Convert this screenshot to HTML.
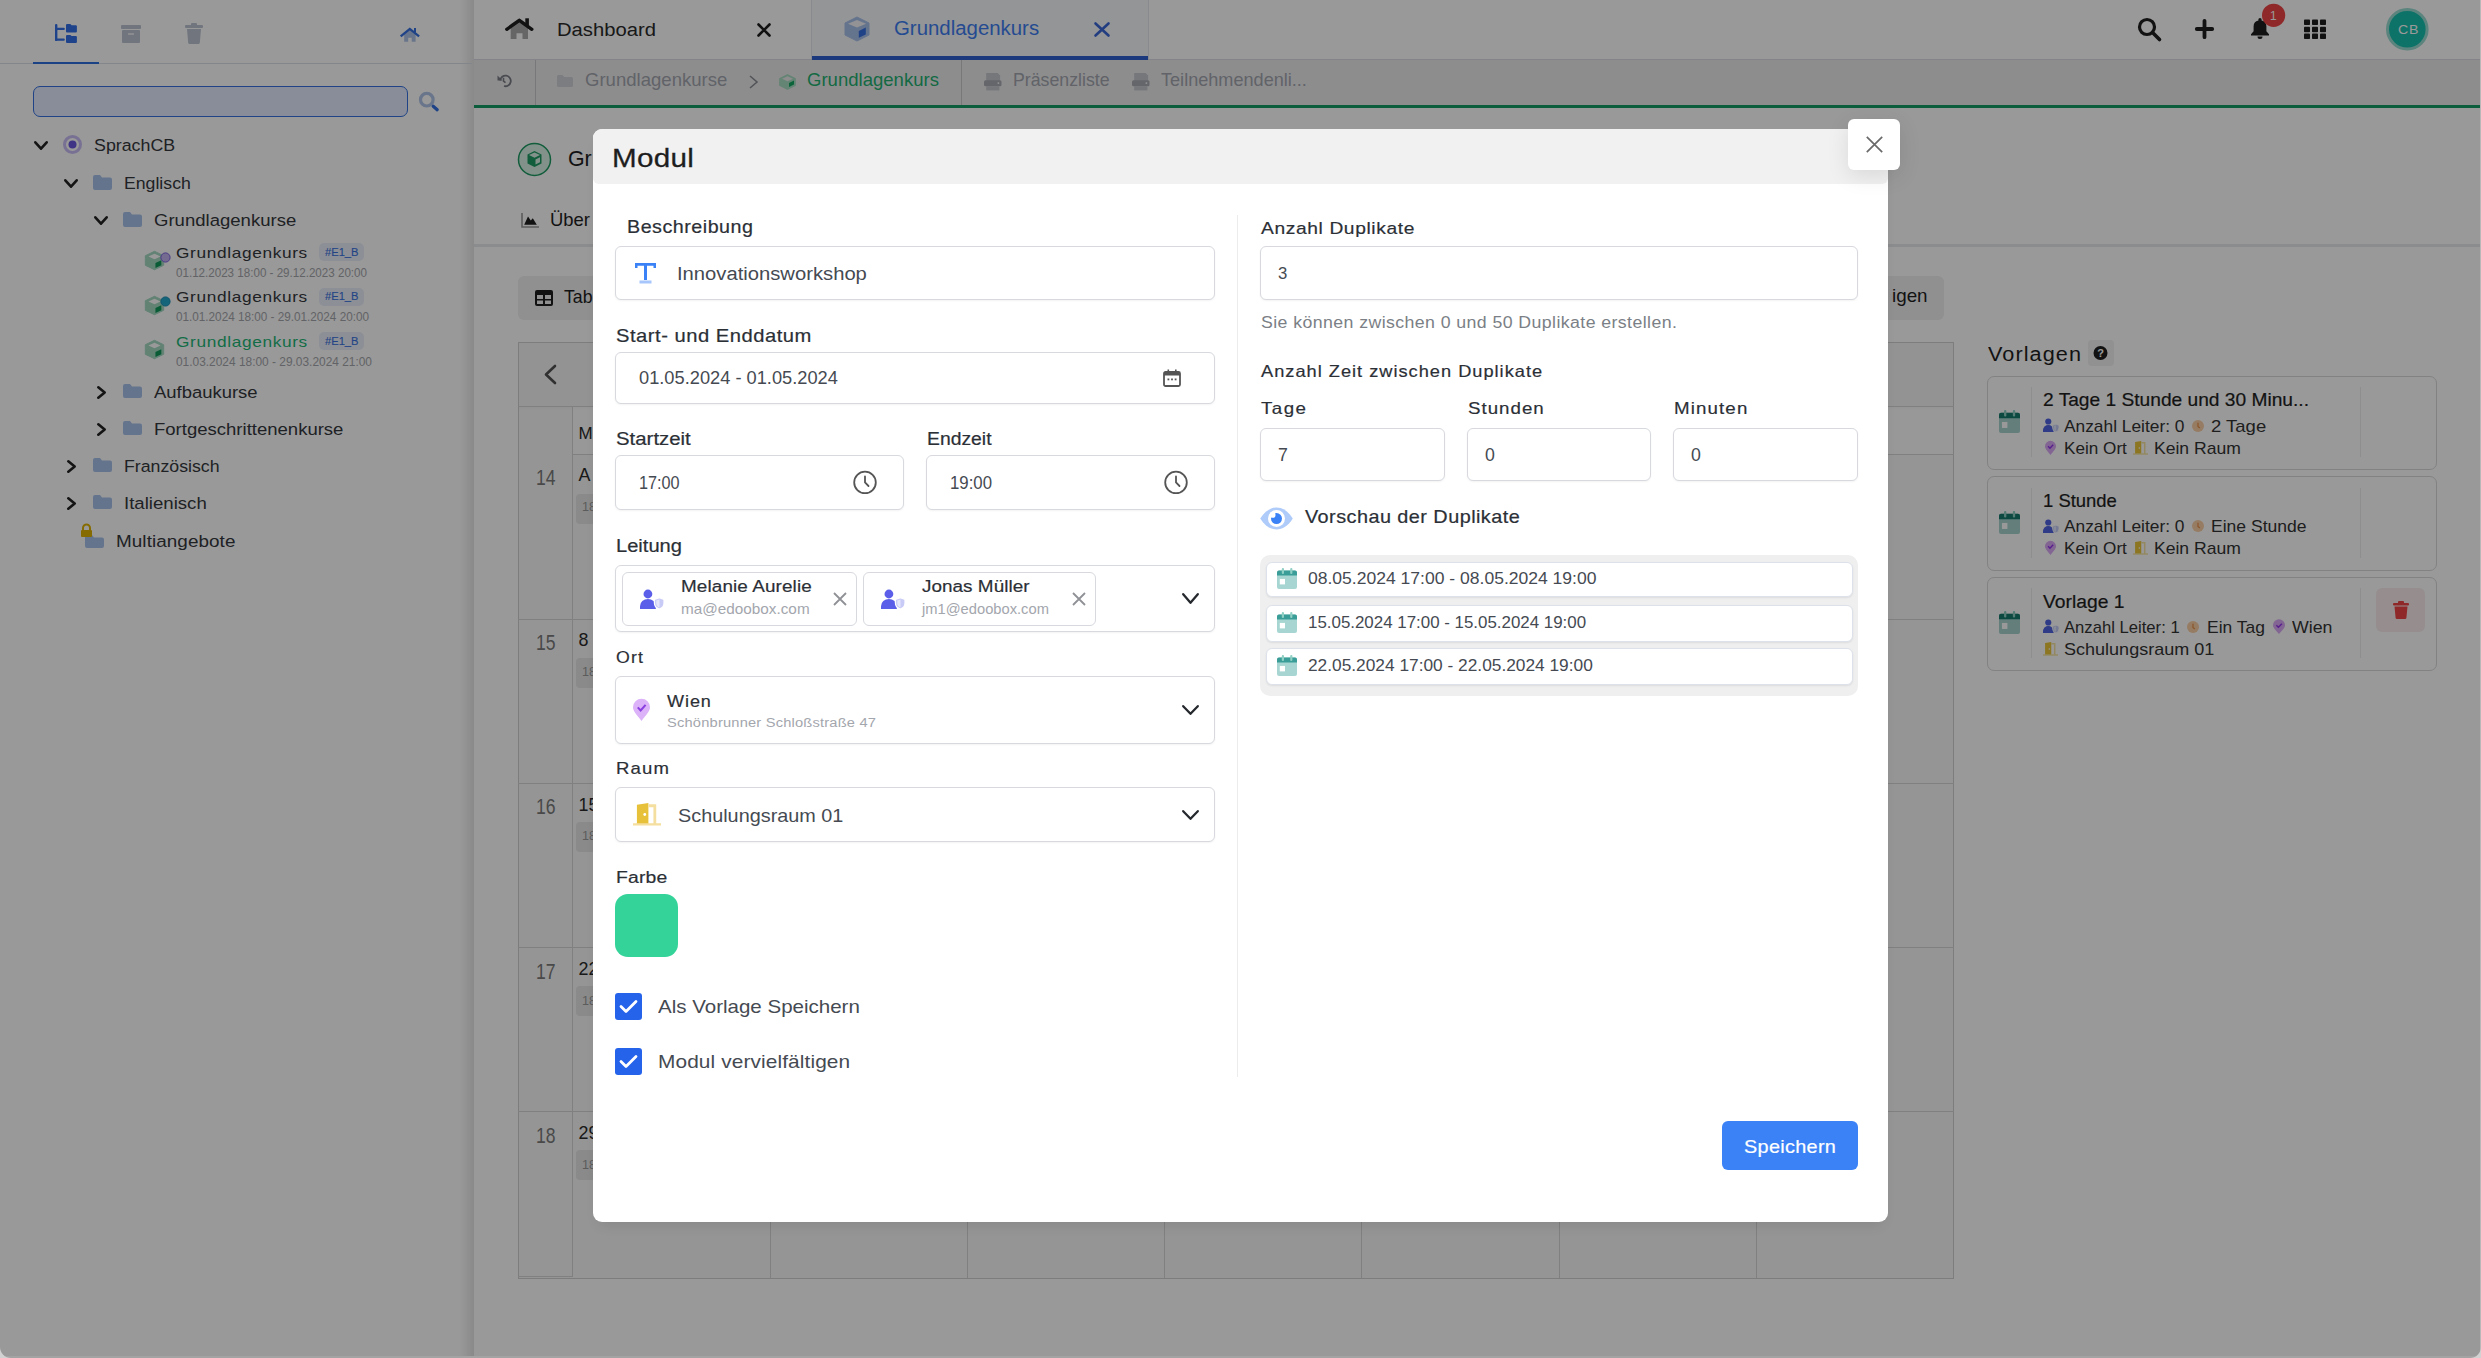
<!DOCTYPE html><html><head><meta charset="utf-8"><title>Modul</title><style>
html,body{margin:0;padding:0;}
body{width:2481px;height:1358px;overflow:hidden;position:relative;font-family:"Liberation Sans",sans-serif;background:#fff;}
.t{position:absolute;white-space:nowrap;line-height:1;}
.r{position:absolute;display:block;}
svg.r{overflow:visible;}
</style></head><body>
<div class="r" style="left:0px;top:0px;width:474px;height:1358px;background:#fff;"></div>
<div class="r" style="left:460px;top:0px;width:14px;height:1358px;background:linear-gradient(90deg,rgba(0,0,0,0) 0%,rgba(0,0,0,0.10) 100%);"></div>
<div class="r" style="left:0px;top:63px;width:472px;height:1px;background:#dbe1ea;"></div>
<div class="r" style="left:33px;top:62px;width:66px;height:2px;background:#2f6fe0;"></div>
<svg class="r" style="left:54px;top:23px;" width="24" height="21" viewBox="0 0 24 21" preserveAspectRatio="none"><g fill="#3470e8"><rect x="1" y="1" width="2.4" height="17" rx="1"/><rect x="2" y="4.7" width="8.8" height="2.2" rx="1"/><rect x="1" y="15.5" width="9.8" height="2.2" rx="1"/><path d="M12 2.2a1.1 1.1 0 0 1 1.1-1.1h3.3l1.2 1.1h4.2a1.1 1.1 0 0 1 1.1 1.1v5.2a1 1 0 0 1-1 1H13a1 1 0 0 1-1-1z"/><path d="M12 13a1.1 1.1 0 0 1 1.1-1.1h3.3l1.2 1.1h4.2a1.1 1.1 0 0 1 1.1 1.1v5a1 1 0 0 1-1 1H13a1 1 0 0 1-1-1z"/></g></svg>
<svg class="r" style="left:121px;top:25px;" width="20" height="18" viewBox="0 0 20 18" preserveAspectRatio="none"><rect x="0" y="0" width="20" height="4" rx="1" fill="#bcc5d2"/><rect x="1" y="5" width="18" height="13" rx="1" fill="#bcc5d2"/><rect x="7" y="8" width="6" height="2" fill="#fff" opacity="0.6"/></svg>
<svg class="r" style="left:185px;top:23px;" width="18" height="21" viewBox="0 0 18 21" preserveAspectRatio="none"><rect x="0" y="2" width="18" height="3" rx="1" fill="#bcc5d2"/><rect x="6" y="0" width="6" height="3" rx="1" fill="#bcc5d2"/><path d="M2 6h14l-1.2 14a1.5 1.5 0 0 1-1.5 1H4.7a1.5 1.5 0 0 1-1.5-1z" fill="#bcc5d2"/></svg>
<svg class="r" style="left:400px;top:26px;" width="20" height="17" viewBox="0 0 20 17" preserveAspectRatio="none"><path d="M4.2 7.3L9.8 2.8l5.8 4.5V15.7H11.7V11.8H8.2V15.7H4.2z" fill="#b0c3e6"/><polyline points="1.6,9.6 9.8,2.9 18.2,9.6" fill="none" stroke="#3470e0" stroke-width="2.3" stroke-linecap="square" stroke-linejoin="miter"/><rect x="14" y="2" width="2" height="4.5" fill="#3470e0"/></svg>
<div class="r" style="left:33px;top:86px;width:375px;height:31px;background:#e3ebff;border:1.6px solid #3470e0;border-radius:7px;box-sizing:border-box;"></div>
<svg class="r" style="left:418px;top:91px;" width="21" height="21" viewBox="0 0 21 21" preserveAspectRatio="none"><circle cx="8.8" cy="8.7" r="6.3" fill="none" stroke="#b0c3e6" stroke-width="3.2"/><path d="M15.2 15.2l4 3.6" stroke="#3470e0" stroke-width="3.2" stroke-linecap="round"/></svg>
<svg class="r" style="left:34px;top:141px;" width="14" height="9" viewBox="0 0 14 9" preserveAspectRatio="none"><polyline points="1.3,1.3 7.0,7.7 12.7,1.3" fill="none" stroke="#222" stroke-width="2.6" stroke-linecap="round" stroke-linejoin="round"/></svg>
<svg class="r" style="left:63px;top:135px;" width="19" height="19" viewBox="0 0 19 19" preserveAspectRatio="none"><circle cx="9.5" cy="9.5" r="8" fill="none" stroke="#c9bdf5" stroke-width="3"/><circle cx="9.5" cy="9.5" r="4" fill="#6a55de"/></svg>
<div class="t" style="left:94.30px;top:138.22px;font-size:16.86px;color:#34373c;transform:scaleX(1.0561);transform-origin:0 0;">SprachCB</div>
<svg class="r" style="left:64px;top:179px;" width="14" height="9" viewBox="0 0 14 9" preserveAspectRatio="none"><polyline points="1.3,1.3 7.0,7.7 12.7,1.3" fill="none" stroke="#222" stroke-width="2.6" stroke-linecap="round" stroke-linejoin="round"/></svg>
<svg class="r" style="left:93px;top:175px;" width="19" height="15" viewBox="0 0 19 15" preserveAspectRatio="none"><path d="M0 2a2 2 0 0 1 2-2h5l2 2.5h8a2 2 0 0 1 2 2V13a2 2 0 0 1-2 2H2a2 2 0 0 1-2-2z" fill="#a9c2ec"/></svg>
<div class="t" style="left:124.00px;top:175.82px;font-size:16.86px;color:#34373c;transform:scaleX(1.0481);transform-origin:0 0;">Englisch</div>
<svg class="r" style="left:94px;top:216px;" width="14" height="9" viewBox="0 0 14 9" preserveAspectRatio="none"><polyline points="1.3,1.3 7.0,7.7 12.7,1.3" fill="none" stroke="#222" stroke-width="2.6" stroke-linecap="round" stroke-linejoin="round"/></svg>
<svg class="r" style="left:123px;top:212px;" width="19" height="15" viewBox="0 0 19 15" preserveAspectRatio="none"><path d="M0 2a2 2 0 0 1 2-2h5l2 2.5h8a2 2 0 0 1 2 2V13a2 2 0 0 1-2 2H2a2 2 0 0 1-2-2z" fill="#a9c2ec"/></svg>
<div class="t" style="left:154.30px;top:212.52px;font-size:16.86px;color:#34373c;transform:scaleX(1.0996);transform-origin:0 0;">Grundlagenkurse</div>
<svg class="r" style="left:145px;top:251.0px;" width="19" height="19.0" viewBox="0 0 19 19.0" preserveAspectRatio="none"><path d="M9.5 0.3L18.7 4.75V14.25L9.5 18.7L0.3 14.25V4.75z" fill="#a3d9c2" stroke="#a3d9c2" stroke-width="1" stroke-linejoin="round"/><path d="M9.5 2.66L15.579999999999998 5.51L9.5 8.36L3.42 5.51z" fill="#ffffff"/><path d="M10.450000000000001 11.97L16.34 9.31V14.25L10.450000000000001 16.91z" fill="#12995a"/></svg>
<svg class="r" style="left:160px;top:251.5px;" width="11" height="11.0" viewBox="0 0 11 11.0" preserveAspectRatio="none"><circle cx="5.5" cy="5.5" r="4.6" fill="#c3b2f0" stroke="#7d5fe0" stroke-width="1"/></svg>
<div class="t" style="left:176.10px;top:244.75px;font-size:15.41px;color:#34373c;letter-spacing:0.578px;transform:scaleX(1.1200);transform-origin:0 0;">Grundlagenkurs</div>
<div class="r" style="left:319px;top:243.2px;width:45px;height:18.30000000000001px;background:#e9effa;border-radius:5px;"></div>
<div class="t" style="left:325.00px;top:246.95px;font-size:11.05px;color:#3a72e0;-webkit-text-stroke:0.12px #3a72e0;transform:scaleX(1.0092);transform-origin:0 0;">#E1_B</div>
<div class="t" style="left:176.10px;top:266.72px;font-size:12.50px;color:#a4a6ab;transform:scaleX(0.9283);transform-origin:0 0;">01.12.2023 18:00 - 29.12.2023 20:00</div>
<svg class="r" style="left:145px;top:295.5px;" width="19" height="19.0" viewBox="0 0 19 19.0" preserveAspectRatio="none"><path d="M9.5 0.3L18.7 4.75V14.25L9.5 18.7L0.3 14.25V4.75z" fill="#a3d9c2" stroke="#a3d9c2" stroke-width="1" stroke-linejoin="round"/><path d="M9.5 2.66L15.579999999999998 5.51L9.5 8.36L3.42 5.51z" fill="#ffffff"/><path d="M10.450000000000001 11.97L16.34 9.31V14.25L10.450000000000001 16.91z" fill="#12995a"/></svg>
<svg class="r" style="left:160px;top:296.0px;" width="11" height="11.0" viewBox="0 0 11 11.0" preserveAspectRatio="none"><circle cx="5.5" cy="5.5" r="4.6" fill="#22a7cc" stroke="#1b8fb5" stroke-width="1"/></svg>
<div class="t" style="left:176.10px;top:289.25px;font-size:15.41px;color:#34373c;letter-spacing:0.578px;transform:scaleX(1.1200);transform-origin:0 0;">Grundlagenkurs</div>
<div class="r" style="left:319px;top:287.7px;width:45px;height:18.30000000000001px;background:#e9effa;border-radius:5px;"></div>
<div class="t" style="left:325.00px;top:291.45px;font-size:11.05px;color:#3a72e0;-webkit-text-stroke:0.12px #3a72e0;transform:scaleX(1.0092);transform-origin:0 0;">#E1_B</div>
<div class="t" style="left:176.10px;top:311.22px;font-size:12.50px;color:#a4a6ab;transform:scaleX(0.9380);transform-origin:0 0;">01.01.2024 18:00 - 29.01.2024 20:00</div>
<svg class="r" style="left:145px;top:340.0px;" width="19" height="19.0" viewBox="0 0 19 19.0" preserveAspectRatio="none"><path d="M9.5 0.3L18.7 4.75V14.25L9.5 18.7L0.3 14.25V4.75z" fill="#a3d9c2" stroke="#a3d9c2" stroke-width="1" stroke-linejoin="round"/><path d="M9.5 2.66L15.579999999999998 5.51L9.5 8.36L3.42 5.51z" fill="#ffffff"/><path d="M10.450000000000001 11.97L16.34 9.31V14.25L10.450000000000001 16.91z" fill="#12995a"/></svg>
<div class="t" style="left:176.10px;top:333.75px;font-size:15.41px;color:#1db676;letter-spacing:0.578px;transform:scaleX(1.1200);transform-origin:0 0;">Grundlagenkurs</div>
<div class="r" style="left:319px;top:332.2px;width:45px;height:18.30000000000001px;background:#e9effa;border-radius:5px;"></div>
<div class="t" style="left:325.00px;top:335.95px;font-size:11.05px;color:#3a72e0;-webkit-text-stroke:0.12px #3a72e0;transform:scaleX(1.0092);transform-origin:0 0;">#E1_B</div>
<div class="t" style="left:176.10px;top:355.72px;font-size:12.50px;color:#a4a6ab;transform:scaleX(0.9526);transform-origin:0 0;">01.03.2024 18:00 - 29.03.2024 21:00</div>
<svg class="r" style="left:97px;top:386px;" width="9" height="13" viewBox="0 0 9 13" preserveAspectRatio="none"><polyline points="1.3,1.3 7.7,6.5 1.3,11.7" fill="none" stroke="#222" stroke-width="2.6" stroke-linecap="round" stroke-linejoin="round"/></svg>
<svg class="r" style="left:123px;top:384px;" width="19" height="14" viewBox="0 0 19 14" preserveAspectRatio="none"><path d="M0 2a2 2 0 0 1 2-2h5l2 2.5h8a2 2 0 0 1 2 2V12a2 2 0 0 1-2 2H2a2 2 0 0 1-2-2z" fill="#a9c2ec"/></svg>
<div class="t" style="left:154.20px;top:384.92px;font-size:16.86px;color:#34373c;transform:scaleX(1.0943);transform-origin:0 0;">Aufbaukurse</div>
<svg class="r" style="left:97px;top:423px;" width="9" height="13" viewBox="0 0 9 13" preserveAspectRatio="none"><polyline points="1.3,1.3 7.7,6.5 1.3,11.7" fill="none" stroke="#222" stroke-width="2.6" stroke-linecap="round" stroke-linejoin="round"/></svg>
<svg class="r" style="left:123px;top:421px;" width="19" height="14" viewBox="0 0 19 14" preserveAspectRatio="none"><path d="M0 2a2 2 0 0 1 2-2h5l2 2.5h8a2 2 0 0 1 2 2V12a2 2 0 0 1-2 2H2a2 2 0 0 1-2-2z" fill="#a9c2ec"/></svg>
<div class="t" style="left:154.20px;top:421.52px;font-size:16.86px;color:#34373c;transform:scaleX(1.0986);transform-origin:0 0;">Fortgeschrittenenkurse</div>
<svg class="r" style="left:67px;top:460px;" width="9" height="13" viewBox="0 0 9 13" preserveAspectRatio="none"><polyline points="1.3,1.3 7.7,6.5 1.3,11.7" fill="none" stroke="#222" stroke-width="2.6" stroke-linecap="round" stroke-linejoin="round"/></svg>
<svg class="r" style="left:93px;top:458px;" width="19" height="14" viewBox="0 0 19 14" preserveAspectRatio="none"><path d="M0 2a2 2 0 0 1 2-2h5l2 2.5h8a2 2 0 0 1 2 2V12a2 2 0 0 1-2 2H2a2 2 0 0 1-2-2z" fill="#a9c2ec"/></svg>
<div class="t" style="left:124.30px;top:459.02px;font-size:16.86px;color:#34373c;transform:scaleX(1.0519);transform-origin:0 0;">Französisch</div>
<svg class="r" style="left:67px;top:497px;" width="9" height="13" viewBox="0 0 9 13" preserveAspectRatio="none"><polyline points="1.3,1.3 7.7,6.5 1.3,11.7" fill="none" stroke="#222" stroke-width="2.6" stroke-linecap="round" stroke-linejoin="round"/></svg>
<svg class="r" style="left:93px;top:495px;" width="19" height="14" viewBox="0 0 19 14" preserveAspectRatio="none"><path d="M0 2a2 2 0 0 1 2-2h5l2 2.5h8a2 2 0 0 1 2 2V12a2 2 0 0 1-2 2H2a2 2 0 0 1-2-2z" fill="#a9c2ec"/></svg>
<div class="t" style="left:124.30px;top:496.22px;font-size:16.86px;color:#34373c;transform:scaleX(1.1035);transform-origin:0 0;">Italienisch</div>
<svg class="r" style="left:85px;top:535px;" width="19" height="13" viewBox="0 0 19 13" preserveAspectRatio="none"><path d="M0 2a2 2 0 0 1 2-2h5l2 2.5h8a2 2 0 0 1 2 2V11a2 2 0 0 1-2 2H2a2 2 0 0 1-2-2z" fill="#a9c2ec"/></svg>
<svg class="r" style="left:80px;top:524px;" width="13" height="13" viewBox="0 0 13 13" preserveAspectRatio="none"><path d="M3 6V4a3.5 3.5 0 0 1 7 0v2" fill="none" stroke="#e0b400" stroke-width="2"/><rect x="1" y="6" width="11" height="7" rx="1" fill="#e0b400"/></svg>
<div class="t" style="left:116.00px;top:534.42px;font-size:16.86px;color:#34373c;letter-spacing:0.060px;transform:scaleX(1.1200);transform-origin:0 0;">Multiangebote</div>
<div class="r" style="left:474px;top:0px;width:2007px;height:60px;background:#fff;"></div>
<div class="r" style="left:474px;top:59px;width:2007px;height:1px;background:#d9dde5;"></div>
<div class="r" style="left:812px;top:0px;width:336px;height:59px;background:#f7f8fa;"></div>
<div class="r" style="left:811px;top:0px;width:1px;height:59px;background:#e3e6ec;"></div>
<div class="r" style="left:1148px;top:0px;width:1px;height:59px;background:#e3e6ec;"></div>
<div class="r" style="left:812px;top:56px;width:336px;height:4px;background:#2f5fd0;"></div>
<svg class="r" style="left:505px;top:17px;" width="29" height="24" viewBox="0 0 29 24" preserveAspectRatio="none"><path d="M5.7 7.2L14.3 1.5 23 7.2V22H17.5v-5.8H11.5V22H5.7z" fill="#aaaaaa"/><polyline points="1.8,12.3 14.3,3.3 26.8,12.3" fill="none" stroke="#1e1e1e" stroke-width="3.4" stroke-linecap="round" stroke-linejoin="round"/><rect x="20.3" y="1.3" width="3.6" height="7.5" fill="#1e1e1e"/></svg>
<div class="t" style="left:556.50px;top:20.87px;font-size:18.46px;color:#2a2a2a;transform:scaleX(1.0967);transform-origin:0 0;">Dashboard</div>
<svg class="r" style="left:757px;top:23px;" width="14" height="14" viewBox="0 0 14 14" preserveAspectRatio="none"><path d="M1.5 1.5l11 11M12.5 1.5l-11 11" stroke="#1d1d1d" stroke-width="2.6" stroke-linecap="round"/></svg>
<svg class="r" style="left:844px;top:16px;" width="26" height="25" viewBox="0 0 26 25" preserveAspectRatio="none"><path d="M13 1L25 7v12L13 25 1 19V7z" fill="#a9c1ec" stroke="#a9c1ec" stroke-width="1" stroke-linejoin="round"/><path d="M13 4L22 7.8 13 11.6 4 7.8z" fill="#f5f6f8"/><path d="M14.8 15l7-3.4v6.8L14.8 21.8z" fill="#3470e0"/></svg>
<div class="t" style="left:893.90px;top:19.13px;font-size:19.33px;color:#3d7ef2;transform:scaleX(1.0549);transform-origin:0 0;">Grundlagenkurs</div>
<svg class="r" style="left:1094px;top:22px;" width="16" height="15" viewBox="0 0 16 15" preserveAspectRatio="none"><path d="M1.5 1.5l13 12M14.5 1.5l-13 12" stroke="#3a66d6" stroke-width="2.6" stroke-linecap="round"/></svg>
<svg class="r" style="left:2137px;top:17px;" width="25" height="24" viewBox="0 0 25 24" preserveAspectRatio="none"><circle cx="10" cy="10" r="7.5" fill="none" stroke="#1e1e1e" stroke-width="3.2"/><path d="M15.5 15.5l7 7" stroke="#1e1e1e" stroke-width="3.6" stroke-linecap="round"/></svg>
<svg class="r" style="left:2195px;top:19px;" width="19" height="20" viewBox="0 0 19 20" preserveAspectRatio="none"><path d="M9.5 1.8v16.4M1.8 10h15.4" stroke="#1e1e1e" stroke-width="3.8" stroke-linecap="round"/></svg>
<svg class="r" style="left:2250px;top:17px;" width="20" height="23" viewBox="0 0 20 23" preserveAspectRatio="none"><path d="M10 1a1.6 1.6 0 0 1 1.6 1.6v.9a6.2 6.2 0 0 1 4.8 6.1v4.6l2.6 3v1.4H1v-1.4l2.6-3V9.6a6.2 6.2 0 0 1 4.8-6.1v-.9A1.6 1.6 0 0 1 10 1z" fill="#1e1e1e"/><path d="M7.5 19.6h5a2.5 2.5 0 0 1-5 0z" fill="#1e1e1e"/></svg>
<svg class="r" style="left:2262px;top:4px;" width="24" height="24" viewBox="0 0 24 24" preserveAspectRatio="none"><circle cx="11.6" cy="11.3" r="11.6" fill="#ef4444"/></svg>
<div class="t" style="left:2270.00px;top:10.71px;font-size:11.92px;color:#fff;">1</div>
<svg class="r" style="left:2304px;top:19px;" width="23" height="20" viewBox="0 0 23 20" preserveAspectRatio="none"><g fill="#1e1e1e"><rect x="0" y="0.5" width="6" height="5.5" rx="0.8"/><rect x="8" y="0.5" width="6" height="5.5" rx="0.8"/><rect x="16" y="0.5" width="6" height="5.5" rx="0.8"/><rect x="0" y="7.7" width="6" height="5.5" rx="0.8"/><rect x="8" y="7.7" width="6" height="5.5" rx="0.8"/><rect x="16" y="7.7" width="6" height="5.5" rx="0.8"/><rect x="0" y="14.5" width="6" height="5.5" rx="0.8"/><rect x="8" y="14.5" width="6" height="5.5" rx="0.8"/><rect x="16" y="14.5" width="6" height="5.5" rx="0.8"/></g></svg>
<svg class="r" style="left:2386px;top:8px;" width="43" height="43" viewBox="0 0 43 43" preserveAspectRatio="none"><circle cx="21.3" cy="21.3" r="19.8" fill="#17c0ad" stroke="#9adcd2" stroke-width="3"/></svg>
<div class="t" style="left:2398.00px;top:23.89px;font-size:12.65px;color:#ffffff;letter-spacing:0.637px;transform:scaleX(1.1200);transform-origin:0 0;">CB</div>
<div class="r" style="left:474px;top:60px;width:2007px;height:45px;background:#ececed;"></div>
<div class="r" style="left:474px;top:105px;width:2007px;height:3px;background:#149c64;"></div>
<div class="r" style="left:535px;top:60px;width:1px;height:45px;background:#c9c9cc;"></div>
<div class="r" style="left:961px;top:60px;width:1px;height:45px;background:#c9c9cc;"></div>
<svg class="r" style="left:497px;top:74px;" width="14" height="13" viewBox="0 0 14 13" preserveAspectRatio="none"><path d="M3.2 6.5A5.3 5.3 0 1 1 7 12" fill="none" stroke="#7a7d85" stroke-width="1.8"/><path d="M0.5 1.5v5h5z" fill="#7a7d85"/><path d="M6.5 3.8v3.2l2 1.6" fill="none" stroke="#7a7d85" stroke-width="1.6"/></svg>
<svg class="r" style="left:557px;top:75px;" width="16" height="12" viewBox="0 0 16 12" preserveAspectRatio="none"><path d="M0 1.5a1.5 1.5 0 0 1 1.5-1.5h4l1.7 2h7.3a1.5 1.5 0 0 1 1.5 1.5v7a1.5 1.5 0 0 1-1.5 1.5h-13A1.5 1.5 0 0 1 0 10.5z" fill="#cdd0d6"/></svg>
<div class="t" style="left:584.80px;top:71.79px;font-size:17.73px;color:#a2a5ad;transform:scaleX(1.0470);transform-origin:0 0;">Grundlagenkurse</div>
<svg class="r" style="left:749px;top:75px;" width="9" height="14" viewBox="0 0 9 14" preserveAspectRatio="none"><polyline points="1,1 8,7 1,13" fill="none" stroke="#8a8c92" stroke-width="1.6"/></svg>
<svg class="r" style="left:779px;top:74px;" width="17" height="15" viewBox="0 0 17 15" preserveAspectRatio="none"><path d="M8.5 0.5L16.5 4.5v7l-8 4-8-4v-7z" fill="#a7dcc2" stroke="#a7dcc2" stroke-width="0.8" stroke-linejoin="round"/><path d="M8.5 2.3L14 4.8 8.5 7.3 3 4.8z" fill="#ececed"/><path d="M10 9l5-2.5v4L10 13z" fill="#15a862"/></svg>
<div class="t" style="left:806.50px;top:71.79px;font-size:17.73px;color:#22b070;transform:scaleX(1.0462);transform-origin:0 0;">Grundlagenkurs</div>
<svg class="r" style="left:984px;top:73px;" width="18" height="18" viewBox="0 0 18 18" preserveAspectRatio="none"><path d="M2.2 0h11.5l2.4 2.4V8H2.2z" fill="#c4c6cc"/><rect x="0" y="7.2" width="17.5" height="6" rx="1.5" fill="#a9abb2"/><rect x="2.2" y="13.2" width="13.2" height="4.2" fill="#c4c6cc"/><rect x="13.6" y="9.4" width="1.6" height="1.4" fill="#fff"/></svg>
<div class="t" style="left:1013.40px;top:71.79px;font-size:17.73px;color:#a2a5ad;transform:scaleX(1.0005);transform-origin:0 0;">Präsenzliste</div>
<svg class="r" style="left:1132px;top:73px;" width="18" height="18" viewBox="0 0 18 18" preserveAspectRatio="none"><path d="M2.2 0h11.5l2.4 2.4V8H2.2z" fill="#c4c6cc"/><rect x="0" y="7.2" width="17.5" height="6" rx="1.5" fill="#a9abb2"/><rect x="2.2" y="13.2" width="13.2" height="4.2" fill="#c4c6cc"/><rect x="13.6" y="9.4" width="1.6" height="1.4" fill="#fff"/></svg>
<div class="t" style="left:1160.70px;top:71.79px;font-size:17.73px;color:#a2a5ad;transform:scaleX(1.0215);transform-origin:0 0;">Teilnehmendenli...</div>
<div class="r" style="left:474px;top:108px;width:2007px;height:1250px;background:#ffffff;"></div>
<div class="r" style="left:474px;top:244px;width:2007px;height:3px;background:#e8e9eb;"></div>
<svg class="r" style="left:517px;top:142px;" width="35" height="35" viewBox="0 0 35 35" preserveAspectRatio="none"><circle cx="17.5" cy="17.5" r="16" fill="#d9f3e6" stroke="#1e9b63" stroke-width="1.5"/><path d="M17.5 9l7 3.5v9l-7 3.5-7-3.5v-9z" fill="#1e9b63"/><path d="M17.5 10.5l5.5 2.6-5.5 2.7-5.5-2.7z" fill="#d9f3e6"/><path d="M18.5 17.5l4.5-2.2v5l-4.5 2.3z" fill="#d9f3e6"/></svg>
<div class="t" style="left:568.00px;top:148.91px;font-size:21.37px;color:#1e1e1e;">Gr</div>
<svg class="r" style="left:521px;top:213px;" width="18" height="15" viewBox="0 0 18 15" preserveAspectRatio="none"><path d="M1 0v14h17" fill="none" stroke="#9a9a9a" stroke-width="1.6"/><path d="M3.2 11.8L7 3.5l2.8 4 2-2.2 4 6.5z" fill="#1e1e1e"/></svg>
<div class="t" style="left:550.00px;top:211.07px;font-size:18.46px;color:#1e1e1e;">Über</div>
<div class="r" style="left:518px;top:276px;width:182px;height:44px;background:#f0f0f1;border-radius:6px;"></div>
<svg class="r" style="left:535px;top:290px;" width="18" height="16" viewBox="0 0 18 16" preserveAspectRatio="none"><rect x="0" y="0" width="18" height="16" rx="2" fill="#1e1e1e"/><g fill="#f0f0f1"><rect x="2" y="5" width="6" height="4"/><rect x="10" y="5" width="6" height="4"/><rect x="2" y="10.5" width="6" height="3.5"/><rect x="10" y="10.5" width="6" height="3.5"/></g></svg>
<div class="t" style="left:564.00px;top:289.09px;font-size:17.73px;color:#1e1e1e;">Tab</div>
<div class="r" style="left:1760px;top:276px;width:184px;height:44px;background:#f0f0f1;border-radius:6px;"></div>
<div class="t" style="left:1892.00px;top:288.29px;font-size:17.73px;color:#1e1e1e;transform:scaleX(1.0622);transform-origin:0 0;">igen</div>
<div class="r" style="left:518px;top:342px;width:1436px;height:937px;border:1px solid #d0d0d0;box-sizing:border-box;background:#f8f8f8;"></div>
<div class="r" style="left:519px;top:343px;width:1434px;height:63px;background:#f5f5f5;"></div>
<div class="r" style="left:572px;top:406px;width:1381px;height:48px;background:#fdfdfd;"></div>
<div class="r" style="left:519px;top:406px;width:1434px;height:4px;background:linear-gradient(rgba(0,0,0,0.03),rgba(0,0,0,0));"></div>
<div class="r" style="left:518px;top:1276px;width:55px;height:1px;background:#d6d6d6;"></div>
<div class="r" style="left:518px;top:406px;width:1436px;height:1px;background:#d6d6d6;"></div>
<svg class="r" style="left:543px;top:364px;" width="14" height="21" viewBox="0 0 14 21" preserveAspectRatio="none"><polyline points="12,2 3,10.5 12,19" fill="none" stroke="#505050" stroke-width="2.6" stroke-linecap="round" stroke-linejoin="round"/></svg>
<div class="r" style="left:572px;top:406px;width:1px;height:871px;background:#d6d6d6;"></div>
<div class="r" style="left:770px;top:406px;width:1px;height:872px;background:#d6d6d6;"></div>
<div class="r" style="left:967px;top:406px;width:1px;height:872px;background:#d6d6d6;"></div>
<div class="r" style="left:1164px;top:406px;width:1px;height:872px;background:#d6d6d6;"></div>
<div class="r" style="left:1361px;top:406px;width:1px;height:872px;background:#d6d6d6;"></div>
<div class="r" style="left:1559px;top:406px;width:1px;height:872px;background:#d6d6d6;"></div>
<div class="r" style="left:1756px;top:406px;width:1px;height:872px;background:#d6d6d6;"></div>
<div class="r" style="left:572px;top:454px;width:1382px;height:1px;background:#d6d6d6;"></div>
<div class="t" style="left:578.60px;top:425.20px;font-size:17.01px;color:#2a2a2a;">M</div>
<div class="t" style="left:535.80px;top:466.89px;font-size:22.09px;color:#7a7a7a;transform:scaleX(0.7952);transform-origin:0 0;">14</div>
<div class="t" style="left:578.60px;top:467.16px;font-size:17.88px;color:#2a2a2a;">A</div>
<div class="r" style="left:576px;top:494px;width:64px;height:30px;background:#e6e6e6;border-radius:4px;"></div>
<div class="t" style="left:582.00px;top:500.89px;font-size:12.65px;color:#999;">18</div>
<div class="r" style="left:518px;top:619px;width:1436px;height:1px;background:#d6d6d6;"></div>
<div class="t" style="left:535.80px;top:632.19px;font-size:22.09px;color:#7a7a7a;transform:scaleX(0.7952);transform-origin:0 0;">15</div>
<div class="t" style="left:578.60px;top:632.46px;font-size:17.88px;color:#2a2a2a;">8</div>
<div class="r" style="left:576px;top:658px;width:64px;height:30px;background:#e6e6e6;border-radius:4px;"></div>
<div class="t" style="left:582.00px;top:666.19px;font-size:12.65px;color:#999;">18</div>
<div class="r" style="left:518px;top:783px;width:1436px;height:1px;background:#d6d6d6;"></div>
<div class="t" style="left:535.80px;top:796.39px;font-size:22.09px;color:#7a7a7a;transform:scaleX(0.7952);transform-origin:0 0;">16</div>
<div class="t" style="left:578.60px;top:796.66px;font-size:17.88px;color:#2a2a2a;">15</div>
<div class="r" style="left:576px;top:822px;width:64px;height:30px;background:#e6e6e6;border-radius:4px;"></div>
<div class="t" style="left:582.00px;top:830.39px;font-size:12.65px;color:#999;">18</div>
<div class="r" style="left:518px;top:947px;width:1436px;height:1px;background:#d6d6d6;"></div>
<div class="t" style="left:535.80px;top:960.59px;font-size:22.09px;color:#7a7a7a;transform:scaleX(0.7952);transform-origin:0 0;">17</div>
<div class="t" style="left:578.60px;top:960.86px;font-size:17.88px;color:#2a2a2a;">22</div>
<div class="r" style="left:576px;top:986px;width:64px;height:30px;background:#e6e6e6;border-radius:4px;"></div>
<div class="t" style="left:582.00px;top:994.59px;font-size:12.65px;color:#999;">18</div>
<div class="r" style="left:518px;top:1111px;width:1436px;height:1px;background:#d6d6d6;"></div>
<div class="t" style="left:535.80px;top:1125.09px;font-size:22.09px;color:#7a7a7a;transform:scaleX(0.7952);transform-origin:0 0;">18</div>
<div class="t" style="left:578.60px;top:1125.36px;font-size:17.88px;color:#2a2a2a;">29</div>
<div class="r" style="left:576px;top:1150px;width:64px;height:30px;background:#e6e6e6;border-radius:4px;"></div>
<div class="t" style="left:582.00px;top:1159.09px;font-size:12.65px;color:#999;">18</div>
<div class="t" style="left:1987.90px;top:345.33px;font-size:19.33px;color:#1e1e1e;letter-spacing:0.954px;transform:scaleX(1.1200);transform-origin:0 0;">Vorlagen</div>
<div class="r" style="left:2088px;top:340px;width:26px;height:26px;background:#f2f2f2;border-radius:4px;"></div>
<svg class="r" style="left:2093px;top:346px;" width="15" height="14" viewBox="0 0 15 14" preserveAspectRatio="none"><circle cx="7.5" cy="7" r="7" fill="#1e1e1e"/><text x="7.5" y="11" font-size="11" font-weight="bold" text-anchor="middle" fill="#fff" font-family="Liberation Sans">?</text></svg>
<div class="r" style="left:1987px;top:376px;width:450px;height:94px;border:1px solid #d9d9d9;border-radius:7px;box-sizing:border-box;background:#fff;"></div>
<div class="r" style="left:2031px;top:387px;width:1px;height:70px;background:#ededed;"></div>
<div class="r" style="left:2360px;top:387px;width:1px;height:70px;background:#ededed;"></div>
<svg class="r" style="left:1999px;top:410px;" width="21" height="23" viewBox="0 0 21 23" preserveAspectRatio="none"><rect x="0" y="2.76" width="21" height="20.24" rx="2" fill="#a6d3cd"/><path d="M2 2.76h17a2 2 0 0 1 2 2V8.28H0V4.76a2 2 0 0 1 2-2z" fill="#147a6c"/><rect x="5.04" y="0" width="2.31" height="6.44" rx="1" fill="#8fcfc4"/><rect x="13.860000000000001" y="0" width="2.31" height="6.44" rx="1" fill="#8fcfc4"/><rect x="2.9400000000000004" y="11.96" width="5.46" height="5.98" fill="#ffffff"/></svg>
<div class="t" style="left:2043.00px;top:391.47px;font-size:18.46px;color:#1e1e1e;-webkit-text-stroke:0.20px #1e1e1e;transform:scaleX(1.0393);transform-origin:0 0;">2 Tage 1 Stunde und 30 Minu...</div>
<svg class="r" style="left:2043px;top:418px;" width="16" height="14" viewBox="0 0 16 14" preserveAspectRatio="none"><circle cx="5.28" cy="3.5" r="3.08" fill="#4f63e0"/><path d="M0 14V12.04A5.28 5.04 0 0 1 10.56 12.04V14z" fill="#4f63e0"/><path d="M12.96 6.16L16 7.28V9.799999999999999Q16 13.020000000000001 12.96 14Q9.6 13.020000000000001 9.6 9.799999999999999V7.28z" fill="#c5cdf7" stroke="#fff" stroke-width="0.8"/><path d="M12.96 7.28V12.88Q10.88 12.04 10.88 9.799999999999999V7.9799999999999995z" fill="#ffffff" opacity="0.55"/></svg>
<div class="t" style="left:2064.00px;top:417.60px;font-size:17.01px;color:#333;transform:scaleX(1.0195);transform-origin:0 0;">Anzahl Leiter: 0</div>
<svg class="r" style="left:2192px;top:419.7px;" width="12" height="12.0" viewBox="0 0 12 12.0" preserveAspectRatio="none"><circle cx="6.0" cy="6.0" r="6.0" fill="#fbcfa6"/><path d="M6.0 2.64V6.6000000000000005l1.92 1.44" fill="none" stroke="#e8924e" stroke-width="1.3"/></svg>
<div class="t" style="left:2211.40px;top:417.60px;font-size:17.01px;color:#333;transform:scaleX(1.0874);transform-origin:0 0;">2 Tage</div>
<svg class="r" style="left:2045px;top:440.7px;" width="11" height="14.0" viewBox="0 0 11 14.0" preserveAspectRatio="none"><path d="M5.5 14.0C2.2 9.799999999999999 0 7.700000000000001 0 5.32A5.5 5.5 0 0 1 11 5.32C11 7.700000000000001 8.8 9.799999999999999 5.5 14.0z" fill="#d9a8f5"/><polyline points="3.08,5.32 4.95,7.28 8.14,3.7800000000000002" fill="none" stroke="#9333ea" stroke-width="1.3199999999999998"/></svg>
<div class="t" style="left:2064.00px;top:439.60px;font-size:17.01px;color:#333;transform:scaleX(1.0078);transform-origin:0 0;">Kein Ort</div>
<svg class="r" style="left:2133px;top:440.7px;" width="15" height="14.0" viewBox="0 0 15 14.0" preserveAspectRatio="none"><path d="M2.1 1.12L8.25 0V12.88H2.1z" fill="#e9c53a"/><path d="M8.25 1.68H11.700000000000001V12.88" fill="none" stroke="#f5e3a0" stroke-width="1.5"/><rect x="0" y="12.32" width="15" height="1.4000000000000001" fill="#f5e3a0"/><circle cx="6.3" cy="7.0" r="0.75" fill="#fff"/></svg>
<div class="t" style="left:2154.40px;top:439.60px;font-size:17.01px;color:#333;transform:scaleX(1.0322);transform-origin:0 0;">Kein Raum</div>
<div class="r" style="left:1987px;top:476px;width:450px;height:95px;border:1px solid #d9d9d9;border-radius:7px;box-sizing:border-box;background:#fff;"></div>
<div class="r" style="left:2031px;top:488px;width:1px;height:70px;background:#ededed;"></div>
<div class="r" style="left:2360px;top:488px;width:1px;height:70px;background:#ededed;"></div>
<svg class="r" style="left:1999px;top:511px;" width="21" height="23" viewBox="0 0 21 23" preserveAspectRatio="none"><rect x="0" y="2.76" width="21" height="20.24" rx="2" fill="#a6d3cd"/><path d="M2 2.76h17a2 2 0 0 1 2 2V8.28H0V4.76a2 2 0 0 1 2-2z" fill="#147a6c"/><rect x="5.04" y="0" width="2.31" height="6.44" rx="1" fill="#8fcfc4"/><rect x="13.860000000000001" y="0" width="2.31" height="6.44" rx="1" fill="#8fcfc4"/><rect x="2.9400000000000004" y="11.96" width="5.46" height="5.98" fill="#ffffff"/></svg>
<div class="t" style="left:2043.00px;top:492.17px;font-size:18.46px;color:#1e1e1e;-webkit-text-stroke:0.20px #1e1e1e;transform:scaleX(1.0009);transform-origin:0 0;">1 Stunde</div>
<svg class="r" style="left:2043px;top:519px;" width="16" height="14" viewBox="0 0 16 14" preserveAspectRatio="none"><circle cx="5.28" cy="3.5" r="3.08" fill="#4f63e0"/><path d="M0 14V12.04A5.28 5.04 0 0 1 10.56 12.04V14z" fill="#4f63e0"/><path d="M12.96 6.16L16 7.28V9.799999999999999Q16 13.020000000000001 12.96 14Q9.6 13.020000000000001 9.6 9.799999999999999V7.28z" fill="#c5cdf7" stroke="#fff" stroke-width="0.8"/><path d="M12.96 7.28V12.88Q10.88 12.04 10.88 9.799999999999999V7.9799999999999995z" fill="#ffffff" opacity="0.55"/></svg>
<div class="t" style="left:2064.00px;top:518.30px;font-size:17.01px;color:#333;transform:scaleX(1.0195);transform-origin:0 0;">Anzahl Leiter: 0</div>
<svg class="r" style="left:2192px;top:520.4px;" width="12" height="12.0" viewBox="0 0 12 12.0" preserveAspectRatio="none"><circle cx="6.0" cy="6.0" r="6.0" fill="#fbcfa6"/><path d="M6.0 2.64V6.6000000000000005l1.92 1.44" fill="none" stroke="#e8924e" stroke-width="1.3"/></svg>
<div class="t" style="left:2211.40px;top:518.30px;font-size:17.01px;color:#333;transform:scaleX(1.0315);transform-origin:0 0;">Eine Stunde</div>
<svg class="r" style="left:2045px;top:541.4px;" width="11" height="14.0" viewBox="0 0 11 14.0" preserveAspectRatio="none"><path d="M5.5 14.0C2.2 9.799999999999999 0 7.700000000000001 0 5.32A5.5 5.5 0 0 1 11 5.32C11 7.700000000000001 8.8 9.799999999999999 5.5 14.0z" fill="#d9a8f5"/><polyline points="3.08,5.32 4.95,7.28 8.14,3.7800000000000002" fill="none" stroke="#9333ea" stroke-width="1.3199999999999998"/></svg>
<div class="t" style="left:2064.00px;top:540.30px;font-size:17.01px;color:#333;transform:scaleX(1.0078);transform-origin:0 0;">Kein Ort</div>
<svg class="r" style="left:2133px;top:541.4px;" width="15" height="14.0" viewBox="0 0 15 14.0" preserveAspectRatio="none"><path d="M2.1 1.12L8.25 0V12.88H2.1z" fill="#e9c53a"/><path d="M8.25 1.68H11.700000000000001V12.88" fill="none" stroke="#f5e3a0" stroke-width="1.5"/><rect x="0" y="12.32" width="15" height="1.4000000000000001" fill="#f5e3a0"/><circle cx="6.3" cy="7.0" r="0.75" fill="#fff"/></svg>
<div class="t" style="left:2154.40px;top:540.30px;font-size:17.01px;color:#333;transform:scaleX(1.0322);transform-origin:0 0;">Kein Raum</div>
<div class="r" style="left:1987px;top:577px;width:450px;height:94px;border:1px solid #d9d9d9;border-radius:7px;box-sizing:border-box;background:#fff;"></div>
<div class="r" style="left:2031px;top:588px;width:1px;height:70px;background:#ededed;"></div>
<div class="r" style="left:2360px;top:588px;width:1px;height:70px;background:#ededed;"></div>
<svg class="r" style="left:1999px;top:611px;" width="21" height="23" viewBox="0 0 21 23" preserveAspectRatio="none"><rect x="0" y="2.76" width="21" height="20.24" rx="2" fill="#a6d3cd"/><path d="M2 2.76h17a2 2 0 0 1 2 2V8.28H0V4.76a2 2 0 0 1 2-2z" fill="#147a6c"/><rect x="5.04" y="0" width="2.31" height="6.44" rx="1" fill="#8fcfc4"/><rect x="13.860000000000001" y="0" width="2.31" height="6.44" rx="1" fill="#8fcfc4"/><rect x="2.9400000000000004" y="11.96" width="5.46" height="5.98" fill="#ffffff"/></svg>
<div class="t" style="left:2043.00px;top:592.67px;font-size:18.46px;color:#1e1e1e;-webkit-text-stroke:0.20px #1e1e1e;transform:scaleX(1.0463);transform-origin:0 0;">Vorlage 1</div>
<svg class="r" style="left:2043px;top:619px;" width="16" height="14" viewBox="0 0 16 14" preserveAspectRatio="none"><circle cx="5.28" cy="3.5" r="3.08" fill="#4f63e0"/><path d="M0 14V12.04A5.28 5.04 0 0 1 10.56 12.04V14z" fill="#4f63e0"/><path d="M12.96 6.16L16 7.28V9.799999999999999Q16 13.020000000000001 12.96 14Q9.6 13.020000000000001 9.6 9.799999999999999V7.28z" fill="#c5cdf7" stroke="#fff" stroke-width="0.8"/><path d="M12.96 7.28V12.88Q10.88 12.04 10.88 9.799999999999999V7.9799999999999995z" fill="#ffffff" opacity="0.55"/></svg>
<div class="t" style="left:2064.00px;top:618.80px;font-size:17.01px;color:#333;transform:scaleX(0.9789);transform-origin:0 0;">Anzahl Leiter: 1</div>
<svg class="r" style="left:2187px;top:620.9px;" width="12" height="12.0" viewBox="0 0 12 12.0" preserveAspectRatio="none"><circle cx="6.0" cy="6.0" r="6.0" fill="#fbcfa6"/><path d="M6.0 2.64V6.6000000000000005l1.92 1.44" fill="none" stroke="#e8924e" stroke-width="1.3"/></svg>
<div class="t" style="left:2206.60px;top:618.80px;font-size:17.01px;color:#333;transform:scaleX(1.0273);transform-origin:0 0;">Ein Tag</div>
<svg class="r" style="left:2273px;top:619.9px;" width="12" height="14.0" viewBox="0 0 12 14.0" preserveAspectRatio="none"><path d="M6.0 14.0C2.4000000000000004 9.799999999999999 0 7.700000000000001 0 5.32A6.0 6.0 0 0 1 12 5.32C12 7.700000000000001 9.600000000000001 9.799999999999999 6.0 14.0z" fill="#d9a8f5"/><polyline points="3.3600000000000003,5.32 5.4,7.28 8.879999999999999,3.7800000000000002" fill="none" stroke="#9333ea" stroke-width="1.44"/></svg>
<div class="t" style="left:2291.50px;top:618.80px;font-size:17.01px;color:#333;transform:scaleX(1.0445);transform-origin:0 0;">Wien</div>
<svg class="r" style="left:2043px;top:641.9px;" width="15" height="14.0" viewBox="0 0 15 14.0" preserveAspectRatio="none"><path d="M2.1 1.12L8.25 0V12.88H2.1z" fill="#e9c53a"/><path d="M8.25 1.68H11.700000000000001V12.88" fill="none" stroke="#f5e3a0" stroke-width="1.5"/><rect x="0" y="12.32" width="15" height="1.4000000000000001" fill="#f5e3a0"/><circle cx="6.3" cy="7.0" r="0.75" fill="#fff"/></svg>
<div class="t" style="left:2064.00px;top:640.80px;font-size:17.01px;color:#333;transform:scaleX(1.0604);transform-origin:0 0;">Schulungsraum 01</div>
<div class="r" style="left:2376px;top:588px;width:49px;height:44px;background:#faeded;border-radius:6px;"></div>
<svg class="r" style="left:2393px;top:601px;" width="16" height="18" viewBox="0 0 16 18" preserveAspectRatio="none"><rect x="0" y="2" width="16" height="2.6" rx="1" fill="#ef4444"/><rect x="5" y="0" width="6" height="3" rx="1" fill="#ef4444"/><path d="M1.5 5.5h13l-1.1 11.5a1.3 1.3 0 0 1-1.3 1H3.9a1.3 1.3 0 0 1-1.3-1z" fill="#ef4444"/></svg>
<div class="r" style="left:0px;top:0px;width:2481px;height:1358px;background:rgba(0,0,0,0.4);"></div>
<div class="r" style="left:2480px;top:0px;width:1px;height:1358px;background:#b8b8b8;"></div>
<div class="r" style="left:0px;top:1356px;width:2481px;height:2px;background:#a3a3a3;"></div>
<svg class="r" style="left:0px;top:1347px;" width="11" height="11" viewBox="0 0 11 11" preserveAspectRatio="none"><path d="M0 0V11H11A11 11 0 0 1 0 0z" fill="#d2d2d2"/></svg>
<svg class="r" style="left:2470px;top:1347px;" width="11" height="11" viewBox="0 0 11 11" preserveAspectRatio="none"><path d="M11 0V11H0A11 11 0 0 0 11 0z" fill="#d2d2d2"/></svg>
<div class="r" style="left:593px;top:129px;width:1295px;height:1093px;background:#fff;border-radius:9px;box-shadow:0 8px 14px -6px rgba(0,0,0,0.10);"></div>
<div class="r" style="left:593px;top:129px;width:1295px;height:55px;background:#f1f1f1;border-radius:9px 9px 6px 6px;"></div>
<div class="t" style="left:612.00px;top:144.60px;font-size:26.45px;color:#1e1e1e;-webkit-text-stroke:0.29px #1e1e1e;letter-spacing:0.282px;transform:scaleX(1.1200);transform-origin:0 0;">Modul</div>
<div class="r" style="left:1848px;top:119px;width:52px;height:51px;background:#fff;border-radius:6px;box-shadow:0 6px 22px rgba(0,0,0,0.10);"></div>
<svg class="r" style="left:1866px;top:136px;" width="17" height="17" viewBox="0 0 17 17" preserveAspectRatio="none"><path d="M0.8 0.8l15.4 15.4M16.2 0.8L0.8 16.2" stroke="#6a6a6a" stroke-width="1.7"/></svg>
<div class="r" style="left:1237px;top:215px;width:1px;height:862px;background:#ececec;"></div>
<div class="t" style="left:627.00px;top:218.91px;font-size:17.59px;color:#2b2f36;-webkit-text-stroke:0.19px #2b2f36;letter-spacing:0.450px;transform:scaleX(1.1200);transform-origin:0 0;">Beschreibung</div>
<div class="r" style="left:615px;top:246px;width:600px;height:54px;border:1px solid #d7d9de;border-radius:6px;box-sizing:border-box;background:#fff;box-shadow:0 1px 2px rgba(0,0,0,0.05);"></div>
<svg class="r" style="left:634px;top:262px;" width="23" height="22" viewBox="0 0 23 22" preserveAspectRatio="none"><path d="M1 1h21v5h-2.5V3.8h-6.5V18h-3V3.8H3.5V6H1z" fill="#3b82f6"/><rect x="5.5" y="18.5" width="12" height="3" fill="#a7c6fb"/></svg>
<div class="t" style="left:677.40px;top:265.37px;font-size:18.46px;color:#454a52;transform:scaleX(1.0961);transform-origin:0 0;">Innovationsworkshop</div>
<div class="t" style="left:616.00px;top:326.94px;font-size:18.02px;color:#2b2f36;-webkit-text-stroke:0.20px #2b2f36;letter-spacing:0.455px;transform:scaleX(1.1200);transform-origin:0 0;">Start- und Enddatum</div>
<div class="r" style="left:615px;top:352px;width:600px;height:52px;border:1px solid #d7d9de;border-radius:6px;box-sizing:border-box;background:#fff;box-shadow:0 1px 2px rgba(0,0,0,0.05);"></div>
<div class="t" style="left:638.70px;top:369.56px;font-size:17.88px;color:#454a52;transform:scaleX(1.0217);transform-origin:0 0;">01.05.2024 - 01.05.2024</div>
<svg class="r" style="left:1163px;top:369px;" width="18" height="18" viewBox="0 0 18 18" preserveAspectRatio="none"><rect x="1" y="3" width="16" height="14" rx="1.5" fill="none" stroke="#555" stroke-width="1.8"/><rect x="1" y="3" width="16" height="3.5" fill="#555"/><rect x="4.5" y="0.5" width="1.6" height="3" fill="#555"/><rect x="12" y="0.5" width="1.6" height="3" fill="#555"/><g fill="#555"><rect x="4.5" y="9.5" width="1.8" height="1.8"/><rect x="8.1" y="9.5" width="1.8" height="1.8"/><rect x="11.7" y="9.5" width="1.8" height="1.8"/></g></svg>
<div class="t" style="left:616.00px;top:430.22px;font-size:18.75px;color:#2b2f36;-webkit-text-stroke:0.21px #2b2f36;transform:scaleX(1.0870);transform-origin:0 0;">Startzeit</div>
<div class="t" style="left:926.80px;top:430.22px;font-size:18.75px;color:#2b2f36;-webkit-text-stroke:0.21px #2b2f36;transform:scaleX(1.0315);transform-origin:0 0;">Endzeit</div>
<div class="r" style="left:615px;top:455px;width:289px;height:55px;border:1px solid #d7d9de;border-radius:6px;box-sizing:border-box;background:#fff;box-shadow:0 1px 2px rgba(0,0,0,0.05);"></div>
<div class="r" style="left:926px;top:455px;width:289px;height:55px;border:1px solid #d7d9de;border-radius:6px;box-sizing:border-box;background:#fff;box-shadow:0 1px 2px rgba(0,0,0,0.05);"></div>
<div class="t" style="left:638.70px;top:474.12px;font-size:18.75px;color:#454a52;transform:scaleX(0.8665);transform-origin:0 0;">17:00</div>
<div class="t" style="left:949.50px;top:474.12px;font-size:18.75px;color:#454a52;transform:scaleX(0.8942);transform-origin:0 0;">19:00</div>
<svg class="r" style="left:853px;top:470px;" width="24" height="25" viewBox="0 0 24 25" preserveAspectRatio="none"><circle cx="12" cy="12.4" r="10.8" fill="none" stroke="#555" stroke-width="1.8"/><path d="M12 6.5v6l3.5 3.5" fill="none" stroke="#555" stroke-width="1.8" stroke-linecap="round"/></svg>
<svg class="r" style="left:1164px;top:470px;" width="24" height="25" viewBox="0 0 24 25" preserveAspectRatio="none"><circle cx="12" cy="12.4" r="10.8" fill="none" stroke="#555" stroke-width="1.8"/><path d="M12 6.5v6l3.5 3.5" fill="none" stroke="#555" stroke-width="1.8" stroke-linecap="round"/></svg>
<div class="t" style="left:616.00px;top:537.04px;font-size:18.02px;color:#2b2f36;-webkit-text-stroke:0.20px #2b2f36;transform:scaleX(1.1164);transform-origin:0 0;">Leitung</div>
<div class="r" style="left:615px;top:565px;width:600px;height:67px;border:1px solid #d7d9de;border-radius:6px;box-sizing:border-box;background:#fff;box-shadow:0 1px 2px rgba(0,0,0,0.05);"></div>
<div class="r" style="left:622px;top:572px;width:235px;height:54px;border:1px solid #d7d9de;border-radius:6px;box-sizing:border-box;"></div>
<svg class="r" style="left:640px;top:589px;" width="24" height="20" viewBox="0 0 24 20" preserveAspectRatio="none"><circle cx="7.92" cy="5.0" r="4.4" fill="#5b5ee8"/><path d="M0 20V17.2A7.92 7.199999999999999 0 0 1 15.84 17.2V20z" fill="#5b5ee8"/><path d="M19.44 8.8L24 10.4V14.0Q24 18.6 19.44 20Q14.399999999999999 18.6 14.399999999999999 14.0V10.4z" fill="#c9cbf7" stroke="#fff" stroke-width="1.2000000000000002"/><path d="M19.44 10.4V18.400000000000002Q16.32 17.2 16.32 14.0V11.399999999999999z" fill="#ffffff" opacity="0.55"/></svg>
<div class="t" style="left:680.70px;top:579.22px;font-size:16.86px;color:#2b2f36;-webkit-text-stroke:0.19px #2b2f36;letter-spacing:0.104px;transform:scaleX(1.1200);transform-origin:0 0;">Melanie Aurelie</div>
<div class="t" style="left:680.70px;top:602.46px;font-size:14.10px;color:#a3a6ad;transform:scaleX(1.0854);transform-origin:0 0;">ma@edoobox.com</div>
<svg class="r" style="left:832.5px;top:592px;" width="14.0" height="14" viewBox="0 0 14.0 14" preserveAspectRatio="none"><path d="M1 1l12 12M13 1L1 13" stroke="#8f9196" stroke-width="1.8" stroke-linecap="butt"/></svg>
<div class="r" style="left:863px;top:572px;width:233px;height:54px;border:1px solid #d7d9de;border-radius:6px;box-sizing:border-box;"></div>
<svg class="r" style="left:881px;top:589px;" width="24" height="20" viewBox="0 0 24 20" preserveAspectRatio="none"><circle cx="7.92" cy="5.0" r="4.4" fill="#5b5ee8"/><path d="M0 20V17.2A7.92 7.199999999999999 0 0 1 15.84 17.2V20z" fill="#5b5ee8"/><path d="M19.44 8.8L24 10.4V14.0Q24 18.6 19.44 20Q14.399999999999999 18.6 14.399999999999999 14.0V10.4z" fill="#c9cbf7" stroke="#fff" stroke-width="1.2000000000000002"/><path d="M19.44 10.4V18.400000000000002Q16.32 17.2 16.32 14.0V11.399999999999999z" fill="#ffffff" opacity="0.55"/></svg>
<div class="t" style="left:921.70px;top:579.22px;font-size:16.86px;color:#2b2f36;-webkit-text-stroke:0.19px #2b2f36;letter-spacing:0.035px;transform:scaleX(1.1200);transform-origin:0 0;">Jonas Müller</div>
<div class="t" style="left:922.07px;top:602.46px;font-size:14.10px;color:#a3a6ad;transform:scaleX(1.0432);transform-origin:0 0;">jm1@edoobox.com</div>
<svg class="r" style="left:1071.5px;top:592px;" width="14.0" height="14" viewBox="0 0 14.0 14" preserveAspectRatio="none"><path d="M1 1l12 12M13 1L1 13" stroke="#8f9196" stroke-width="1.8" stroke-linecap="butt"/></svg>
<svg class="r" style="left:1182px;top:593px;" width="17" height="11" viewBox="0 0 17 11" preserveAspectRatio="none"><polyline points="1.2,1.2 8.5,9.8 15.8,1.2" fill="none" stroke="#25292e" stroke-width="2.3" stroke-linecap="round" stroke-linejoin="round"/></svg>
<div class="t" style="left:616.00px;top:650.29px;font-size:15.84px;color:#2b2f36;-webkit-text-stroke:0.17px #2b2f36;letter-spacing:1.042px;transform:scaleX(1.1200);transform-origin:0 0;">Ort</div>
<div class="r" style="left:615px;top:676px;width:600px;height:68px;border:1px solid #d7d9de;border-radius:6px;box-sizing:border-box;background:#fff;box-shadow:0 1px 2px rgba(0,0,0,0.05);"></div>
<svg class="r" style="left:633px;top:699px;" width="17" height="22" viewBox="0 0 17 22" preserveAspectRatio="none"><path d="M8.5 22C3.4000000000000004 15.399999999999999 0 12.100000000000001 0 8.36A8.5 8.5 0 0 1 17 8.36C17 12.100000000000001 13.600000000000001 15.399999999999999 8.5 22z" fill="#dcb2f8"/><polyline points="4.760000000000001,8.36 7.65,11.440000000000001 12.58,5.94" fill="none" stroke="#8b3fe0" stroke-width="2.04"/></svg>
<div class="t" style="left:667.00px;top:692.84px;font-size:16.13px;color:#2b2f36;-webkit-text-stroke:0.18px #2b2f36;letter-spacing:0.833px;transform:scaleX(1.1200);transform-origin:0 0;">Wien</div>
<div class="t" style="left:667.00px;top:715.72px;font-size:13.08px;color:#a3a6ad;letter-spacing:0.179px;transform:scaleX(1.1200);transform-origin:0 0;">Schönbrunner Schloßstraße 47</div>
<svg class="r" style="left:1182px;top:705px;" width="17" height="10" viewBox="0 0 17 10" preserveAspectRatio="none"><polyline points="1.2,1.2 8.5,8.8 15.8,1.2" fill="none" stroke="#25292e" stroke-width="2.3" stroke-linecap="round" stroke-linejoin="round"/></svg>
<div class="t" style="left:616.00px;top:760.57px;font-size:16.57px;color:#2b2f36;-webkit-text-stroke:0.18px #2b2f36;letter-spacing:0.997px;transform:scaleX(1.1200);transform-origin:0 0;">Raum</div>
<div class="r" style="left:615px;top:787px;width:600px;height:55px;border:1px solid #d7d9de;border-radius:6px;box-sizing:border-box;background:#fff;box-shadow:0 1px 2px rgba(0,0,0,0.05);"></div>
<svg class="r" style="left:633px;top:803px;" width="28" height="23" viewBox="0 0 28 23" preserveAspectRatio="none"><path d="M3.9200000000000004 1.84L15.400000000000002 0V21.16H3.9200000000000004z" fill="#e8c13a"/><path d="M15.400000000000002 2.76H21.84V21.16" fill="none" stroke="#f5dfa0" stroke-width="2.8000000000000003"/><rect x="0" y="20.24" width="28" height="2.3000000000000003" fill="#f5dfa0"/><circle cx="11.76" cy="11.5" r="1.4000000000000001" fill="#fff"/></svg>
<div class="t" style="left:678.20px;top:806.54px;font-size:18.02px;color:#454a52;transform:scaleX(1.1010);transform-origin:0 0;">Schulungsraum 01</div>
<svg class="r" style="left:1182px;top:810px;" width="17" height="10" viewBox="0 0 17 10" preserveAspectRatio="none"><polyline points="1.2,1.2 8.5,8.8 15.8,1.2" fill="none" stroke="#25292e" stroke-width="2.3" stroke-linecap="round" stroke-linejoin="round"/></svg>
<div class="t" style="left:615.70px;top:869.25px;font-size:17.30px;color:#2b2f36;-webkit-text-stroke:0.19px #2b2f36;letter-spacing:0.165px;transform:scaleX(1.1200);transform-origin:0 0;">Farbe</div>
<div class="r" style="left:615px;top:894px;width:63px;height:63px;background:#34d399;border-radius:13px;"></div>
<div class="r" style="left:615px;top:993px;width:27px;height:27px;background:#2563eb;border-radius:3px;"></div>
<svg class="r" style="left:619px;top:999px;" width="19" height="15" viewBox="0 0 19 15" preserveAspectRatio="none"><polyline points="2,7.5 7,12.5 17,2.5" fill="none" stroke="#fff" stroke-width="2.8" stroke-linecap="round" stroke-linejoin="round"/></svg>
<div class="t" style="left:658.00px;top:997.65px;font-size:18.60px;color:#454a52;transform:scaleX(1.1034);transform-origin:0 0;">Als Vorlage Speichern</div>
<div class="r" style="left:615px;top:1048px;width:27px;height:27px;background:#2563eb;border-radius:3px;"></div>
<svg class="r" style="left:619px;top:1054px;" width="19" height="15" viewBox="0 0 19 15" preserveAspectRatio="none"><polyline points="2,7.5 7,12.5 17,2.5" fill="none" stroke="#fff" stroke-width="2.8" stroke-linecap="round" stroke-linejoin="round"/></svg>
<div class="t" style="left:658.00px;top:1052.75px;font-size:18.60px;color:#454a52;letter-spacing:0.101px;transform:scaleX(1.1200);transform-origin:0 0;">Modul vervielfältigen</div>
<div class="t" style="left:1260.70px;top:219.58px;font-size:17.15px;color:#2b2f36;-webkit-text-stroke:0.19px #2b2f36;letter-spacing:0.555px;transform:scaleX(1.1200);transform-origin:0 0;">Anzahl Duplikate</div>
<div class="r" style="left:1260px;top:246px;width:598px;height:54px;border:1px solid #d7d9de;border-radius:6px;box-sizing:border-box;background:#fff;box-shadow:0 1px 2px rgba(0,0,0,0.05);"></div>
<div class="t" style="left:1278.00px;top:265.95px;font-size:16.72px;color:#454a52;">3</div>
<div class="t" style="left:1260.70px;top:315.39px;font-size:15.84px;color:#7b7f86;letter-spacing:0.367px;transform:scaleX(1.1200);transform-origin:0 0;">Sie können zwischen 0 und 50 Duplikate erstellen.</div>
<div class="t" style="left:1260.70px;top:363.42px;font-size:16.28px;color:#2b2f36;-webkit-text-stroke:0.18px #2b2f36;letter-spacing:0.892px;transform:scaleX(1.1200);transform-origin:0 0;">Anzahl Zeit zwischen Duplikate</div>
<div class="t" style="left:1260.70px;top:401.15px;font-size:16.72px;color:#2b2f36;-webkit-text-stroke:0.18px #2b2f36;letter-spacing:1.302px;transform:scaleX(1.1200);transform-origin:0 0;">Tage</div>
<div class="r" style="left:1260px;top:428px;width:185px;height:53px;border:1px solid #d7d9de;border-radius:6px;box-sizing:border-box;background:#fff;box-shadow:0 1px 2px rgba(0,0,0,0.05);"></div>
<div class="t" style="left:1278.00px;top:446.79px;font-size:17.73px;color:#454a52;">7</div>
<div class="t" style="left:1467.70px;top:401.15px;font-size:16.72px;color:#2b2f36;-webkit-text-stroke:0.18px #2b2f36;letter-spacing:0.902px;transform:scaleX(1.1200);transform-origin:0 0;">Stunden</div>
<div class="r" style="left:1467px;top:428px;width:184px;height:53px;border:1px solid #d7d9de;border-radius:6px;box-sizing:border-box;background:#fff;box-shadow:0 1px 2px rgba(0,0,0,0.05);"></div>
<div class="t" style="left:1485.00px;top:446.79px;font-size:17.73px;color:#454a52;">0</div>
<div class="t" style="left:1673.70px;top:401.15px;font-size:16.72px;color:#2b2f36;-webkit-text-stroke:0.18px #2b2f36;letter-spacing:1.005px;transform:scaleX(1.1200);transform-origin:0 0;">Minuten</div>
<div class="r" style="left:1673px;top:428px;width:185px;height:53px;border:1px solid #d7d9de;border-radius:6px;box-sizing:border-box;background:#fff;box-shadow:0 1px 2px rgba(0,0,0,0.05);"></div>
<div class="t" style="left:1691.00px;top:446.79px;font-size:17.73px;color:#454a52;">0</div>
<svg class="r" style="left:1260px;top:507px;" width="33" height="23" viewBox="0 0 33 23" preserveAspectRatio="none"><path d="M0.2 11.5C5 4 10.5 0.5 16.5 0.5S28 4 32.8 11.5C28 19 22.5 22.5 16.5 22.5S5 19 0.2 11.5z" fill="#aecbfa"/><circle cx="16.5" cy="11.6" r="8.5" fill="#ffffff"/><circle cx="16.5" cy="11.6" r="5.5" fill="#3b82f6"/><circle cx="12.6" cy="7.9" r="2.9" fill="#ffffff"/></svg>
<div class="t" style="left:1305.20px;top:509.29px;font-size:17.73px;color:#2b2f36;-webkit-text-stroke:0.20px #2b2f36;letter-spacing:0.406px;transform:scaleX(1.1200);transform-origin:0 0;">Vorschau der Duplikate</div>
<div class="r" style="left:1260px;top:555px;width:598px;height:141px;background:#efefef;border-radius:10px;"></div>
<div class="r" style="left:1266px;top:562px;width:587px;height:35px;background:#fff;border:1px solid #dde2ea;border-radius:6px;box-sizing:border-box;box-shadow:0 1px 2px rgba(0,0,0,0.08);"></div>
<svg class="r" style="left:1277px;top:568px;" width="20" height="21" viewBox="0 0 20 21" preserveAspectRatio="none"><rect x="0" y="2.52" width="20" height="18.48" rx="2" fill="#a7d6d2"/><path d="M2 2.52h16a2 2 0 0 1 2 2V7.56H0V4.52a2 2 0 0 1 2-2z" fill="#3a9d97"/><rect x="4.8" y="0" width="2.2" height="5.880000000000001" rx="1" fill="#8fcfc4"/><rect x="13.200000000000001" y="0" width="2.2" height="5.880000000000001" rx="1" fill="#8fcfc4"/><rect x="2.8000000000000003" y="10.92" width="5.2" height="5.46" fill="#fff"/></svg>
<div class="t" style="left:1308.40px;top:570.30px;font-size:17.01px;color:#454a52;transform:scaleX(1.0310);transform-origin:0 0;">08.05.2024 17:00 - 08.05.2024 19:00</div>
<div class="r" style="left:1266px;top:605px;width:587px;height:37px;background:#fff;border:1px solid #dde2ea;border-radius:6px;box-sizing:border-box;box-shadow:0 1px 2px rgba(0,0,0,0.08);"></div>
<svg class="r" style="left:1277px;top:612px;" width="20" height="21" viewBox="0 0 20 21" preserveAspectRatio="none"><rect x="0" y="2.52" width="20" height="18.48" rx="2" fill="#a7d6d2"/><path d="M2 2.52h16a2 2 0 0 1 2 2V7.56H0V4.52a2 2 0 0 1 2-2z" fill="#3a9d97"/><rect x="4.8" y="0" width="2.2" height="5.880000000000001" rx="1" fill="#8fcfc4"/><rect x="13.200000000000001" y="0" width="2.2" height="5.880000000000001" rx="1" fill="#8fcfc4"/><rect x="2.8000000000000003" y="10.92" width="5.2" height="5.46" fill="#fff"/></svg>
<div class="t" style="left:1308.40px;top:614.20px;font-size:17.01px;color:#454a52;transform:scaleX(0.9939);transform-origin:0 0;">15.05.2024 17:00 - 15.05.2024 19:00</div>
<div class="r" style="left:1266px;top:648px;width:587px;height:37px;background:#fff;border:1px solid #dde2ea;border-radius:6px;box-sizing:border-box;box-shadow:0 1px 2px rgba(0,0,0,0.08);"></div>
<svg class="r" style="left:1277px;top:655px;" width="20" height="21" viewBox="0 0 20 21" preserveAspectRatio="none"><rect x="0" y="2.52" width="20" height="18.48" rx="2" fill="#a7d6d2"/><path d="M2 2.52h16a2 2 0 0 1 2 2V7.56H0V4.52a2 2 0 0 1 2-2z" fill="#3a9d97"/><rect x="4.8" y="0" width="2.2" height="5.880000000000001" rx="1" fill="#8fcfc4"/><rect x="13.200000000000001" y="0" width="2.2" height="5.880000000000001" rx="1" fill="#8fcfc4"/><rect x="2.8000000000000003" y="10.92" width="5.2" height="5.46" fill="#fff"/></svg>
<div class="t" style="left:1308.40px;top:657.10px;font-size:17.01px;color:#454a52;transform:scaleX(1.0178);transform-origin:0 0;">22.05.2024 17:00 - 22.05.2024 19:00</div>
<div class="r" style="left:1722px;top:1121px;width:136px;height:49px;background:#3b82f6;border-radius:6px;"></div>
<div class="t" style="left:1744.00px;top:1139.29px;font-size:17.73px;color:#fff;-webkit-text-stroke:0.20px #fff;letter-spacing:0.282px;transform:scaleX(1.1200);transform-origin:0 0;">Speichern</div>
</body></html>
